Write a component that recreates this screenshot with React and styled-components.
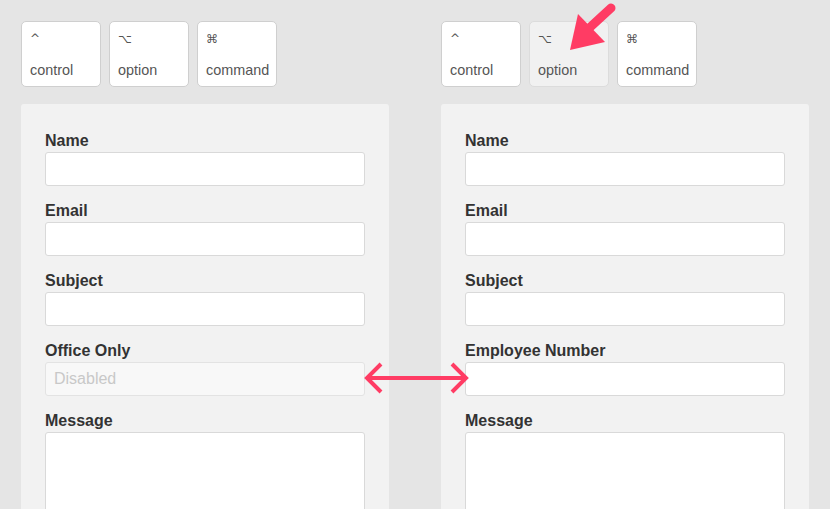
import React from 'react';
import styled, { createGlobalStyle } from 'styled-components';

const GlobalStyle = createGlobalStyle`
  body {
    margin: 0;
    background: #e5e5e5;
    font-family: "Liberation Sans", Arial, sans-serif;
    overflow: hidden;
  }
`

const Page = styled.div`
  position: relative;
  display: flex;
  gap: 52px;
  padding: 21px 21px 0;
  height: 509px;
  box-sizing: border-box;
  overflow: hidden;
`

const Column = styled.div`
  width: 368px;
  display: flex;
  flex-direction: column;
  gap: 17px;
`

const KeyRow = styled.div`
  display: flex;
  gap: 8px;
`

const Key = styled.div`
  width: 80px;
  height: 66px;
  box-sizing: border-box;
  border: 1px solid ${p => (p.pressed ? '#dcdcdc' : '#cfcfcf')};
  border-radius: 5px;
  background: ${p => (p.pressed ? '#f1f1f1' : '#fff')};
  padding: 8px;
  display: flex;
  flex-direction: column;
  justify-content: space-between;
  color: #555;
`

const Symbol = styled.span`
  font-family: "DejaVu Sans", sans-serif;
  font-size: 12px;
  line-height: 18px;
`

const KeyName = styled.span`
  font-size: 14.4px;
  line-height: 16px;
`

const Panel = styled.div`
  background: #f2f2f2;
  border-radius: 3px;
  padding: 27px 24px;
  flex: 1;
`

const Field = styled.div`
  display: flex;
  flex-direction: column;
  gap: 1px;
  margin-bottom: 15px;
`

const Label = styled.label`
  font-size: 16px;
  line-height: 20px;
  font-weight: bold;
  color: #333;
`

const Input = styled.input`
  height: 34px;
  box-sizing: border-box;
  border: 1px solid ${p => (p.disabled ? '#e3e3e3' : '#d9d9d9')};
  border-radius: 3px;
  background: ${p => (p.disabled ? '#f8f8f8' : '#fff')};
  padding: 0 8px;
  font-family: inherit;
  font-size: 16px;
  &::placeholder {
    color: #c8c8c8;
  }
`

const TextArea = styled.textarea`
  height: 130px;
  box-sizing: border-box;
  border: 1px solid #d9d9d9;
  border-radius: 3px;
  background: #fff;
  resize: none;
`

const Overlay = styled.svg`
  position: absolute;
  left: 0;
  top: 0;
  pointer-events: none;
`

const keys = [
  { sym: '^', name: 'control' },
  { sym: '⌥', name: 'option' },
  { sym: '⌘', name: 'command' },
]

const Form = ({ special }) => (
  <Panel>
    <Field>
      <Label>Name</Label>
      <Input />
    </Field>
    <Field>
      <Label>Email</Label>
      <Input />
    </Field>
    <Field>
      <Label>Subject</Label>
      <Input />
    </Field>
    {special ? (
      <Field>
        <Label>Employee Number</Label>
        <Input />
      </Field>
    ) : (
      <Field>
        <Label>Office Only</Label>
        <Input disabled placeholder='Disabled' />
      </Field>
    )}
    <Field>
      <Label>Message</Label>
      <TextArea />
    </Field>
  </Panel>
)

const Side = ({ pressed, special }) => (
  <Column>
    <KeyRow>
      {keys.map(k => (
        <Key key={k.name} pressed={pressed === k.name}>
          <Symbol>{k.sym}</Symbol>
          <KeyName>{k.name}</KeyName>
        </Key>
      ))}
    </KeyRow>
    <Form special={special} />
  </Column>
)

const App = () => {
  return (
    <>
      <GlobalStyle />
      <Page>
        <Side />
        <Side pressed='option' special />
        <Overlay width='830' height='509'>
          <g stroke='#ff3c64' strokeWidth='4' fill='none'>
            <line x1='369' y1='378' x2='464' y2='378' />
            <polyline points='381,364 367,378 381,392' />
            <polyline points='452,364 466,378 452,392' />
          </g>
          <line x1='611' y1='8' x2='586' y2='31' stroke='#ff3c64' strokeWidth='9' strokeLinecap='round' />
          <polygon points='578,14 605,42 570,50' fill='#ff3c64' />
        </Overlay>
      </Page>
    </>
  )
}

export default App;
